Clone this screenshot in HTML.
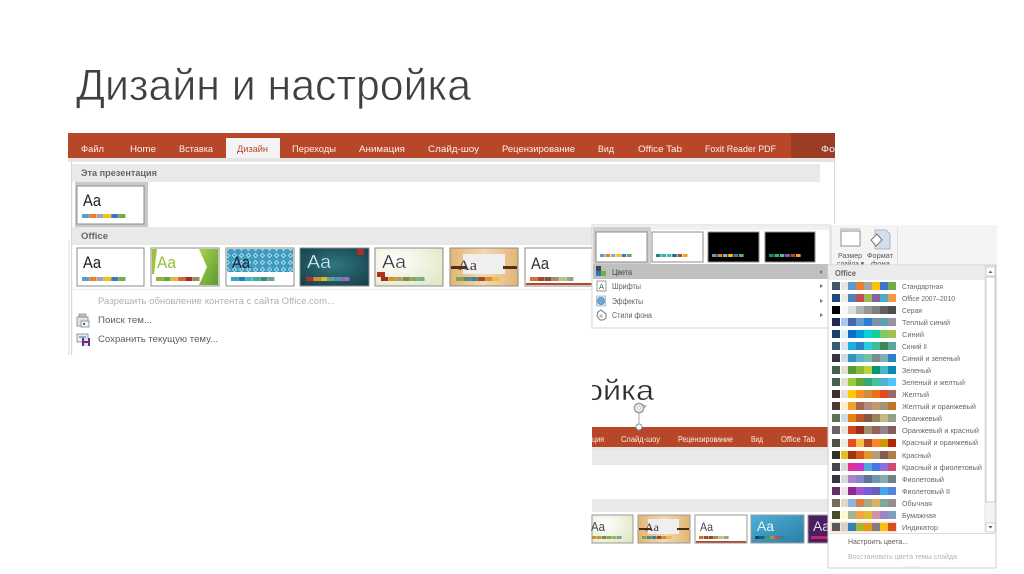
<!DOCTYPE html>
<html lang="ru"><head><meta charset="utf-8"><title>Дизайн и настройка</title>
<style>
html,body{margin:0;padding:0;background:#fff;width:1024px;height:574px;overflow:hidden}
svg{display:block;font-family:"Liberation Sans",sans-serif}
.b{filter:blur(.3px)}
.w{fill:#fbf0eb;font-size:9.5px}
.m{fill:#5e5e5e;font-size:8px}
.k{fill:#686868;font-size:7.5px}
.a{fill:#1e1e1e;font-size:17px}
.s rect{width:8px;height:8px}
.t rect{width:7px;height:4px}
.u rect{width:4.6px;height:3px}
</style></head><body>
<svg width="1024" height="574" viewBox="0 0 1024 574" xmlns="http://www.w3.org/2000/svg">
<defs>
<radialGradient id="g4" cx=".5" cy=".45" r=".65"><stop offset="0" stop-color="#2f7680"/><stop offset="1" stop-color="#17434e"/></radialGradient>
<radialGradient id="g5" cx=".3" cy=".35" r=".8"><stop offset="0" stop-color="#fff"/><stop offset="1" stop-color="#e2e9c8"/></radialGradient>
<linearGradient id="g6" x1="0" x2="1" y1="0" y2="0"><stop offset="0" stop-color="#e3b574"/><stop offset=".5" stop-color="#f4d9b0"/><stop offset="1" stop-color="#e3b574"/></linearGradient>
<linearGradient id="g7" x1="0" x2="1" y1="0" y2="1"><stop offset="0" stop-color="#4db0d4"/><stop offset="1" stop-color="#2a7ea6"/></linearGradient>
<linearGradient id="g2" x1="0" x2="1" y1="0" y2="1"><stop offset="0" stop-color="#a9d154"/><stop offset="1" stop-color="#5c9a2c"/></linearGradient>
<pattern id="p3" width="7" height="7" patternUnits="userSpaceOnUse"><rect width="7" height="7" fill="#3c9cc2"/><path d="M3.500 .8l2.700 2.700-2.700 2.700-2.700-2.700z" fill="#b4dde9"/><circle cx="3.500" cy="3.500" r="1" fill="#2a7fa3"/></pattern>
</defs>
<text x="76" y="100" font-size="44" fill="#404040" stroke="#fff" stroke-width=".7" textLength="395" lengthAdjust="spacingAndGlyphs">Дизайн и настройка</text>
<g class="b">
<!-- Main ribbon -->
<rect x="68" y="133" width="767" height="25" fill="#b8472a"/>
<rect x="791" y="133" width="44" height="25" fill="#9b3d25"/>
<rect x="226" y="138" width="54" height="20" fill="#f4f4f4"/>
<text class="w" x="81" y="152" textLength="23" lengthAdjust="spacingAndGlyphs">Файл</text>
<text class="w" x="130" y="152" textLength="26" lengthAdjust="spacingAndGlyphs">Home</text>
<text class="w" x="179" y="152" textLength="34" lengthAdjust="spacingAndGlyphs">Вставка</text>
<text x="237" y="152" font-size="9.5" fill="#b8472a" textLength="31" lengthAdjust="spacingAndGlyphs">Дизайн</text>
<text class="w" x="292" y="152" textLength="44" lengthAdjust="spacingAndGlyphs">Переходы</text>
<text class="w" x="359" y="152" textLength="46" lengthAdjust="spacingAndGlyphs">Анимация</text>
<text class="w" x="428" y="152" textLength="51" lengthAdjust="spacingAndGlyphs">Слайд-шоу</text>
<text class="w" x="502" y="152" textLength="73" lengthAdjust="spacingAndGlyphs">Рецензирование</text>
<text class="w" x="598" y="152" textLength="16" lengthAdjust="spacingAndGlyphs">Вид</text>
<text class="w" x="638" y="152" textLength="44" lengthAdjust="spacingAndGlyphs">Office Tab</text>
<text class="w" x="705" y="152" textLength="71" lengthAdjust="spacingAndGlyphs">Foxit Reader PDF</text>
<text class="w" x="821" y="152" textLength="14" lengthAdjust="spacingAndGlyphs">Фо</text>
<!-- Panel -->
<rect x="68" y="158" width="767" height="4" fill="#e4e4e4"/>
<rect x="71" y="162" width="1.2" height="193" fill="#d8d8d8"/>
<rect x="68" y="240" width="2" height="115" fill="#ececec"/>
<rect x="834" y="158" width="1.2" height="66" fill="#d8d8d8"/>
<rect x="72" y="164" width="748" height="18" fill="#e9e9e9"/>
<text x="81" y="176" font-size="9" font-weight="bold" fill="#666" textLength="76" lengthAdjust="spacingAndGlyphs">Эта презентация</text>
<rect x="75" y="182" width="73" height="45" fill="#c9c9c9"/>
<rect x="77" y="186" width="67" height="38" fill="#fff" stroke="#8b8b8b" stroke-width="1"/>
<text class="a" x="83" y="206" textLength="18" lengthAdjust="spacingAndGlyphs">Aa</text>
<g class="t" transform="translate(82,214)"><rect x="0" fill="#5b9bd5"/><rect x="7.300" fill="#ed7d31"/><rect x="14.600" fill="#a5a5a5"/><rect x="21.900" fill="#ffc000"/><rect x="29.200" fill="#4472c4"/><rect x="36.500" fill="#70ad47"/></g>
<rect x="72" y="227" width="520" height="18" fill="#e9e9e9"/>
<text x="81" y="239" font-size="9.5" font-weight="bold" fill="#666" textLength="27" lengthAdjust="spacingAndGlyphs">Office</text>
<!-- Thumb 1 -->
<rect x="77" y="248" width="67" height="38" fill="#fff" stroke="#8b8b8b"/>
<text class="a" x="83" y="268" textLength="18" lengthAdjust="spacingAndGlyphs">Aa</text>
<g class="t" transform="translate(82,277)"><rect x="0" fill="#5b9bd5"/><rect x="7.300" fill="#ed7d31"/><rect x="14.600" fill="#a5a5a5"/><rect x="21.900" fill="#ffc000"/><rect x="29.200" fill="#4472c4"/><rect x="36.500" fill="#70ad47"/></g>
<!-- Thumb 2 -->
<rect x="151" y="248" width="68" height="38" fill="#fff" stroke="#8b8b8b"/>
<path d="M152 249h5l-3 25h-2z" fill="#9cc43c"/>
<path d="M199 249h19v36h-19l8-18z" fill="url(#g2)"/>
<text x="157" y="268" font-size="17" fill="#96c03a" textLength="19" lengthAdjust="spacingAndGlyphs">Aa</text>
<g class="t" transform="translate(156,277)"><rect x="0" fill="#8ab833"/><rect x="7.300" fill="#63a537"/><rect x="14.600" fill="#e3b440"/><rect x="21.900" fill="#d9632d"/><rect x="29.200" fill="#a62a20"/><rect x="36.500" fill="#9c8a60"/></g>
<!-- Thumb 3 -->
<rect x="226" y="248" width="68" height="38" fill="#fff" stroke="#8b8b8b"/>
<rect x="227" y="249" width="66" height="23" fill="url(#p3)"/>
<text x="232" y="268" font-size="17" fill="#14263a" textLength="18" lengthAdjust="spacingAndGlyphs">Aa</text>
<g class="t" transform="translate(231,277)"><rect x="0" fill="#35a5cf"/><rect x="7.300" fill="#2a7eb0"/><rect x="14.600" fill="#3fb9c9"/><rect x="21.900" fill="#3fae9d"/><rect x="29.200" fill="#3d8d72"/><rect x="36.500" fill="#6ba3a0"/></g>
<!-- Thumb 4 -->
<rect x="300" y="248" width="69" height="38" fill="url(#g4)" stroke="#8b8b8b"/>
<rect x="357" y="249" width="7" height="6" fill="#a8302c"/>
<text x="307" y="268" font-size="18" fill="#dbecef" stroke="#1f5c68" stroke-width=".3" textLength="24" lengthAdjust="spacingAndGlyphs">Aa</text>
<g class="t" transform="translate(306,277)"><rect x="0" fill="#b82a24"/><rect x="7.300" fill="#d98a28"/><rect x="14.600" fill="#dcb733"/><rect x="21.900" fill="#6f9e8c"/><rect x="29.200" fill="#5e8db5"/><rect x="36.500" fill="#a26bb0"/></g>
<!-- Thumb 5 -->
<rect x="375" y="248" width="68" height="38" fill="url(#g5)" stroke="#8b8b8b"/>
<text x="382" y="268" font-size="18" fill="#333" stroke="#fff" stroke-width=".3" textLength="24" lengthAdjust="spacingAndGlyphs">Aa</text>
<rect x="377" y="272" width="8" height="5" fill="#b0341e"/>
<g class="t" transform="translate(381,277)"><rect x="0" fill="#a02c1c"/><rect x="7.300" fill="#d88c2c"/><rect x="14.600" fill="#b39a60"/><rect x="21.900" fill="#7f8c4c"/><rect x="29.200" fill="#8fa55c"/><rect x="36.500" fill="#6fae98"/></g>
<!-- Thumb 6 -->
<rect x="450" y="248" width="68" height="38" fill="url(#g6)" stroke="#8b8b8b"/>
<rect x="463" y="254" width="42" height="20" fill="#f0eeee"/>
<rect x="451" y="266" width="15" height="3" fill="#55301a"/><rect x="503" y="266" width="14" height="3" fill="#55301a"/>
<text x="458" y="270" font-size="15" font-family="Liberation Serif" fill="#3a3a3a" textLength="19" lengthAdjust="spacingAndGlyphs">Aa</text>
<g class="t" transform="translate(456,277)"><rect x="0" fill="#7fa558"/><rect x="7.300" fill="#548c80"/><rect x="14.600" fill="#3e7fa8"/><rect x="21.900" fill="#a3492a"/><rect x="29.200" fill="#dd8a34"/><rect x="36.500" fill="#e5c04c"/></g>
<!-- Thumb 7 -->
<rect x="525" y="248" width="68" height="38" fill="#fff" stroke="#8b8b8b"/>
<text x="531" y="269" font-size="17" fill="#333" textLength="18" lengthAdjust="spacingAndGlyphs">Aa</text>
<g class="t" transform="translate(530,277)"><rect x="0" fill="#d5712b"/><rect x="7.300" fill="#a04a2a"/><rect x="14.600" fill="#84533c"/><rect x="21.900" fill="#a58e6a"/><rect x="29.200" fill="#c4c08c"/><rect x="36.500" fill="#96a48c"/></g>
<rect x="526" y="283" width="66" height="2" fill="#b8472a"/>
<rect x="73" y="289" width="519" height="1" fill="#ececec"/>
<!-- Menu lines -->
<text x="98" y="304" font-size="9.5" fill="#b0b0b0" textLength="237" lengthAdjust="spacingAndGlyphs">Разрешить обновление контента с сайта Office.com...</text>
<text x="98" y="323" font-size="9.5" fill="#5e5e5e" textLength="54" lengthAdjust="spacingAndGlyphs">Поиск тем...</text>
<text x="98" y="342" font-size="9.5" fill="#5e5e5e" textLength="120" lengthAdjust="spacingAndGlyphs">Сохранить текущую тему...</text>
<!-- Search icon -->
<rect x="79" y="314" width="7" height="3" fill="#c4c8cc" stroke="#7f8488" stroke-width=".7"/>
<rect x="77" y="317" width="11" height="9" fill="#dfe4e8" stroke="#7f8488" stroke-width=".8"/>
<rect x="81" y="321" width="8" height="6" fill="#f0f2f4" stroke="#808488" stroke-width=".8"/>
<rect x="83" y="323" width="2" height="2" fill="#2f6d99"/>
<!-- Save icon -->
<rect x="77" y="334" width="11" height="8" fill="#e8ecf0" stroke="#7b8388" stroke-width=".8"/>
<rect x="79" y="336" width="7" height="2" fill="#8fb0c8"/>
<rect x="82" y="338" width="8" height="8" fill="#6a2d82"/>
<rect x="84" y="338" width="4" height="3" fill="#e8dcef"/><rect x="84" y="343" width="4" height="3" fill="#e8dcef"/>
<!-- Second title fragment -->
<svg x="592" y="360" width="70" height="50"><text x="-7" y="40" font-size="29" fill="#2e2e2e" stroke="#fff" stroke-width=".4" textLength="69" lengthAdjust="spacingAndGlyphs">ойка</text></svg>
<circle cx="639" cy="408" r="4.600" fill="none" stroke="#a0a0a0" stroke-width="1.600"/><circle cx="639" cy="408" r="2" fill="none" stroke="#c0c0c0"/>
<path d="M643 405l3 1-2 2" fill="none" stroke="#a0a0a0"/>
<line x1="639" y1="413" x2="639" y2="425" stroke="#a8a8a8"/>
<!-- Second ribbon -->
<rect x="592" y="427" width="236" height="20" fill="#b8472a"/>
<circle cx="639" cy="427" r="3" fill="#fff" stroke="#7f92a8" stroke-width="1"/>
<g font-size="8" fill="#fbf0eb">
<text x="592" y="442" textLength="12" lengthAdjust="spacingAndGlyphs">ция</text>
<text x="621" y="442" textLength="39" lengthAdjust="spacingAndGlyphs">Слайд-шоу</text>
<text x="678" y="442" textLength="55" lengthAdjust="spacingAndGlyphs">Рецензирование</text>
<text x="751" y="442" textLength="12" lengthAdjust="spacingAndGlyphs">Вид</text>
<text x="781" y="442" textLength="34" lengthAdjust="spacingAndGlyphs">Office Tab</text>
</g>
<rect x="592" y="447" width="236" height="3" fill="#e4e4e4"/>
<rect x="592" y="450" width="236" height="15" fill="#e9e9e9"/>
<rect x="592" y="499" width="236" height="13" fill="#e9e9e9"/>
<!-- Lower thumbs -->
<rect x="592" y="515" width="41" height="28" fill="url(#g5)" stroke="#999"/>
<text x="591" y="531" font-size="13" fill="#444" textLength="14" lengthAdjust="spacingAndGlyphs">Aa</text>
<g class="u" transform="translate(592,536)"><rect x="0" fill="#d88c2c"/><rect x="5" fill="#b39a60"/><rect x="10" fill="#7f8c4c"/><rect x="15" fill="#8fa55c"/><rect x="20" fill="#9bb46c"/><rect x="25" fill="#6fae98"/></g>
<rect x="638" y="515" width="52" height="28" fill="url(#g6)" stroke="#999"/>
<rect x="648" y="519" width="31" height="15" fill="#f0eeee"/>
<rect x="639" y="528" width="12" height="2" fill="#4c2c18"/><rect x="677" y="528" width="12" height="2" fill="#4c2c18"/>
<text x="645" y="531" font-size="11.500" font-family="Liberation Serif" fill="#3a3a3a" textLength="14" lengthAdjust="spacingAndGlyphs">Aa</text>
<g class="u" transform="translate(642,536)"><rect x="0" fill="#7fa558"/><rect x="5" fill="#548c80"/><rect x="10" fill="#3e7fa8"/><rect x="15" fill="#a3492a"/><rect x="20" fill="#dd8a34"/><rect x="25" fill="#e5c04c"/></g>
<rect x="695" y="515" width="52" height="28" fill="#fff" stroke="#999"/>
<text x="700" y="531" font-size="12" fill="#444" textLength="13" lengthAdjust="spacingAndGlyphs">Aa</text>
<g class="u" transform="translate(699,536)"><rect x="0" fill="#d5712b"/><rect x="5" fill="#a04a2a"/><rect x="10" fill="#84533c"/><rect x="15" fill="#a58e6a"/><rect x="20" fill="#c4c08c"/><rect x="25" fill="#96a48c"/></g>
<rect x="696" y="541" width="50" height="1.600" fill="#b8472a"/>
<rect x="751" y="515" width="53" height="28" fill="url(#g7)" stroke="#999"/>
<text x="757" y="531" font-size="14" fill="#e8f6fa" textLength="17" lengthAdjust="spacingAndGlyphs">Aa</text>
<g class="u" transform="translate(755,536)"><rect x="0" fill="#173b70"/><rect x="5" fill="#1d5d8c"/><rect x="10" fill="#3f9f5e"/><rect x="15" fill="#c8843a"/><rect x="20" fill="#c04f3a"/><rect x="25" fill="#2f7fa0"/></g>
<rect x="808" y="515" width="22" height="28" fill="#4a1f5f" stroke="#999"/>
<text x="813" y="531" font-size="14" fill="#e7d8ee" textLength="17" lengthAdjust="spacingAndGlyphs">Aa</text>
<rect x="811" y="536" width="17" height="3" fill="#c3246c"/>
<!-- Right toolbar fragment -->
<rect x="830" y="225" width="167" height="42" fill="#f4f4f4"/>
<rect x="897" y="227" width="1" height="38" fill="#dedede"/>
<rect x="831" y="226" width="1" height="40" fill="#e4e4e4"/>
<rect x="841" y="231" width="19" height="15" fill="#fff" stroke="#8f8f8f"/>
<path d="M840 229h20" stroke="#b0b0b0"/>
<path d="M875 230h11l4 4v15h-15z" fill="#d3dfec" stroke="#9aa8b8" stroke-width=".8"/>
<path d="M877 234l-6 6 5 6 6-6z" fill="#fff" stroke="#777"/>
<text x="838" y="258" font-size="7.500" fill="#555" textLength="24" lengthAdjust="spacingAndGlyphs">Размер</text>
<text x="867" y="258" font-size="7.500" fill="#555" textLength="26" lengthAdjust="spacingAndGlyphs">Формат</text>
<text x="837" y="266" font-size="7.500" fill="#555" textLength="27" lengthAdjust="spacingAndGlyphs">слайда ▾</text>
<text x="871" y="266" font-size="7.500" fill="#555" textLength="19" lengthAdjust="spacingAndGlyphs">фона</text>
<!-- Dropdown panel -->
<rect x="592" y="225" width="238" height="103" fill="#fff" stroke="#d4d4d4"/>
<rect x="593" y="226" width="236" height="4" fill="#f1f1f1"/>
<rect x="593" y="227" width="58" height="37" fill="#cfcfcf"/>
<rect x="596" y="232" width="51" height="30" fill="#fff" stroke="#8b8b8b"/>
<rect x="652" y="232" width="51" height="30" fill="#fff" stroke="#8b8b8b"/>
<rect x="708" y="232" width="51" height="30" fill="#000" stroke="#8b8b8b"/>
<rect x="765" y="232" width="50" height="30" fill="#000" stroke="#8b8b8b"/>
<g class="u" transform="translate(600,254)"><rect x="0" fill="#5b9bd5"/><rect x="5.400" fill="#ed7d31"/><rect x="10.800" fill="#a5a5a5"/><rect x="16.200" fill="#ffc000"/><rect x="21.600" fill="#4472c4"/><rect x="27" fill="#70ad47"/></g>
<g class="u" transform="translate(656,254)"><rect x="0" fill="#1a8a78"/><rect x="5.400" fill="#3cb0a8"/><rect x="10.800" fill="#4ab5c4"/><rect x="16.200" fill="#1e6d8a"/><rect x="21.600" fill="#b24a30"/><rect x="27" fill="#f0a22e"/></g>
<g class="u" transform="translate(712,254)"><rect x="0" fill="#5b9bd5"/><rect x="5.400" fill="#ed7d31"/><rect x="10.800" fill="#a5a5a5"/><rect x="16.200" fill="#ffc000"/><rect x="21.600" fill="#4472c4"/><rect x="27" fill="#70ad47"/></g>
<g class="u" transform="translate(769,254)"><rect x="0" fill="#1a8a78"/><rect x="5.400" fill="#3cb06a"/><rect x="10.800" fill="#4ab5c4"/><rect x="16.200" fill="#8c5ab8"/><rect x="21.600" fill="#b24a30"/><rect x="27" fill="#f0a22e"/></g>
<rect x="593" y="264" width="235" height="15" fill="#c0c0c0"/>
<rect x="596" y="266" width="5" height="5" fill="#34495e"/><rect x="601" y="266" width="5" height="5" fill="#b8c2a8"/><rect x="596" y="271" width="5" height="5" fill="#2e75b6"/><rect x="601" y="271" width="5" height="5" fill="#70ad47"/>
<text class="m" x="612" y="275" textLength="20" lengthAdjust="spacingAndGlyphs" style="fill:#444">Цвета</text>
<rect x="597" y="281" width="9" height="10" fill="#fff" stroke="#9a9a9a"/>
<text x="599" y="289" font-size="7.500" fill="#2a5a8a">A</text>
<text class="m" x="612" y="289" textLength="29" lengthAdjust="spacingAndGlyphs">Шрифты</text>
<rect x="596.500" y="296" width="9" height="10" fill="#dbe7f0" stroke="#9ab4c8" stroke-width=".7"/><circle cx="601" cy="301" r="3.600" fill="#6fa8d8" stroke="#4f7fa8" stroke-width=".7"/>
<text class="m" x="612" y="304" textLength="31" lengthAdjust="spacingAndGlyphs">Эффекты</text>
<path d="M598 312l3-2 5 4v4l-3 2h-3l-3-4z" fill="#fff" stroke="#777"/><circle cx="601" cy="316" r="1.600" fill="#bbb"/>
<text class="m" x="612" y="318" textLength="40" lengthAdjust="spacingAndGlyphs">Стили фона</text>
<g fill="#777"><path d="M820 270l3 2-3 2zM820 284l3 2-3 2zM820 299l3 2-3 2zM820 313l3 2-3 2z"/></g>
<!-- Colours list -->
<rect x="828" y="265" width="168" height="303" fill="#fff" stroke="#cfcfcf"/>
<rect x="829" y="266" width="156" height="14" fill="#ececec"/>
<text x="835" y="276" font-size="8" font-weight="bold" fill="#666" textLength="21" lengthAdjust="spacingAndGlyphs">Office</text>
<rect x="985" y="266" width="10" height="266" fill="#f3f3f3" stroke="#dcdcdc" stroke-width=".7"/>
<rect x="986" y="267" width="9" height="9" fill="#fff" stroke="#bbb" stroke-width=".6"/>
<path d="M988.500 273l2-2.500 2 2.500z" fill="#666"/>
<rect x="986" y="277" width="9" height="225" fill="#fff" stroke="#c4c4c4" stroke-width=".8"/>
<rect x="986" y="523" width="9" height="9" fill="#fff" stroke="#bbb" stroke-width=".6"/>
<path d="M988.500 526l2 2.500 2-2.500z" fill="#555"/>
<rect x="830" y="521.500" width="67" height="11" fill="#f8e2d4"/>
<g class="s">
<g transform="translate(832,282)"><rect x="0" fill="#44546a"/><rect x="9" fill="#e7e6e6"/><rect x="16" fill="#5b9bd5"/><rect x="24" fill="#ed7d31"/><rect x="32" fill="#a5a5a5"/><rect x="40" fill="#ffc000"/><rect x="48" fill="#4472c4"/><rect x="56" fill="#70ad47"/></g>
<g transform="translate(832,294)"><rect x="0" fill="#1f497d"/><rect x="9" fill="#eeece1"/><rect x="16" fill="#4f81bd"/><rect x="24" fill="#c0504d"/><rect x="32" fill="#9bbb59"/><rect x="40" fill="#8064a2"/><rect x="48" fill="#4bacc6"/><rect x="56" fill="#f79646"/></g>
<g transform="translate(832,306)"><rect x="0" fill="#000"/><rect x="9" fill="#f8f8f8"/><rect x="16" fill="#ddd"/><rect x="24" fill="#b2b2b2"/><rect x="32" fill="#969696"/><rect x="40" fill="#808080"/><rect x="48" fill="#5f5f5f"/><rect x="56" fill="#4d4d4d"/></g>
<g transform="translate(832,318)"><rect x="0" fill="#242852"/><rect x="9" fill="#acc9f0"/><rect x="16" fill="#4a66ac"/><rect x="24" fill="#629dd1"/><rect x="32" fill="#297fd5"/><rect x="40" fill="#7f8fa9"/><rect x="48" fill="#5aa2ae"/><rect x="56" fill="#9d90a0"/></g>
<g transform="translate(832,330)"><rect x="0" fill="#17406d"/><rect x="9" fill="#dbeff9"/><rect x="16" fill="#0f6fc6"/><rect x="24" fill="#009dd9"/><rect x="32" fill="#0bd0d9"/><rect x="40" fill="#10cf9b"/><rect x="48" fill="#7cca62"/><rect x="56" fill="#a5c249"/></g>
<g transform="translate(832,342)"><rect x="0" fill="#335b74"/><rect x="9" fill="#dfe3e5"/><rect x="16" fill="#1cade4"/><rect x="24" fill="#2683c6"/><rect x="32" fill="#27ced7"/><rect x="40" fill="#42ba97"/><rect x="48" fill="#3e8853"/><rect x="56" fill="#62a39f"/></g>
<g transform="translate(832,354)"><rect x="0" fill="#373545"/><rect x="9" fill="#cedbe6"/><rect x="16" fill="#3494ba"/><rect x="24" fill="#58b6c0"/><rect x="32" fill="#75bda7"/><rect x="40" fill="#7a8c8e"/><rect x="48" fill="#84acb6"/><rect x="56" fill="#2683c6"/></g>
<g transform="translate(832,366)"><rect x="0" fill="#455f51"/><rect x="9" fill="#e3ded1"/><rect x="16" fill="#549e39"/><rect x="24" fill="#8ab833"/><rect x="32" fill="#c0cf3a"/><rect x="40" fill="#029676"/><rect x="48" fill="#4ab5c4"/><rect x="56" fill="#0989b1"/></g>
<g transform="translate(832,378)"><rect x="0" fill="#455f51"/><rect x="9" fill="#e3ded1"/><rect x="16" fill="#99cb38"/><rect x="24" fill="#63a537"/><rect x="32" fill="#37a76f"/><rect x="40" fill="#44c1a3"/><rect x="48" fill="#4eb3cf"/><rect x="56" fill="#51c3f9"/></g>
<g transform="translate(832,390)"><rect x="0" fill="#39302a"/><rect x="9" fill="#e5dedb"/><rect x="16" fill="#ffca08"/><rect x="24" fill="#f8931d"/><rect x="32" fill="#ce8d3e"/><rect x="40" fill="#ec7016"/><rect x="48" fill="#e64823"/><rect x="56" fill="#9c6a6a"/></g>
<g transform="translate(832,402)"><rect x="0" fill="#4e3b30"/><rect x="9" fill="#fbeec9"/><rect x="16" fill="#f0a22e"/><rect x="24" fill="#a5644e"/><rect x="32" fill="#b58b80"/><rect x="40" fill="#c3986d"/><rect x="48" fill="#a19574"/><rect x="56" fill="#c17529"/></g>
<g transform="translate(832,414)"><rect x="0" fill="#637052"/><rect x="9" fill="#ccddea"/><rect x="16" fill="#e48312"/><rect x="24" fill="#bd582c"/><rect x="32" fill="#865640"/><rect x="40" fill="#9b8357"/><rect x="48" fill="#c2bc80"/><rect x="56" fill="#94a088"/></g>
<g transform="translate(832,426)"><rect x="0" fill="#696464"/><rect x="9" fill="#e9e5dc"/><rect x="16" fill="#d34817"/><rect x="24" fill="#9b2d1f"/><rect x="32" fill="#a28e6a"/><rect x="40" fill="#956251"/><rect x="48" fill="#918485"/><rect x="56" fill="#855d5d"/></g>
<g transform="translate(832,439)"><rect x="0" fill="#505046"/><rect x="9" fill="#eeece1"/><rect x="16" fill="#e84c22"/><rect x="24" fill="#ffbd47"/><rect x="32" fill="#b64926"/><rect x="40" fill="#ff8427"/><rect x="48" fill="#cc9900"/><rect x="56" fill="#b22600"/></g>
<g transform="translate(832,451)"><rect x="0" fill="#2f2f2f"/><rect x="9" fill="#e5c020"/><rect x="16" fill="#9d3511"/><rect x="24" fill="#d55816"/><rect x="32" fill="#e19825"/><rect x="40" fill="#b19c7d"/><rect x="48" fill="#7f5f52"/><rect x="56" fill="#b27d49"/></g>
<g transform="translate(832,463)"><rect x="0" fill="#454551"/><rect x="9" fill="#d8d9dc"/><rect x="16" fill="#e32d91"/><rect x="24" fill="#c830cc"/><rect x="32" fill="#4ea6dc"/><rect x="40" fill="#4775e7"/><rect x="48" fill="#8971e1"/><rect x="56" fill="#d54773"/></g>
<g transform="translate(832,475)"><rect x="0" fill="#373545"/><rect x="9" fill="#dcd8dc"/><rect x="16" fill="#ad84c6"/><rect x="24" fill="#8784c7"/><rect x="32" fill="#5d739a"/><rect x="40" fill="#6997af"/><rect x="48" fill="#84acb6"/><rect x="56" fill="#6f8183"/></g>
<g transform="translate(832,487)"><rect x="0" fill="#632e62"/><rect x="9" fill="#eae5eb"/><rect x="16" fill="#92278f"/><rect x="24" fill="#9b57d3"/><rect x="32" fill="#755dd9"/><rect x="40" fill="#665eb8"/><rect x="48" fill="#45a5ed"/><rect x="56" fill="#5982db"/></g>
<g transform="translate(832,499)"><rect x="0" fill="#776a5e"/><rect x="9" fill="#dfd9c8"/><rect x="16" fill="#8eb5d9"/><rect x="24" fill="#dd8047"/><rect x="32" fill="#a5ab81"/><rect x="40" fill="#d8b25c"/><rect x="48" fill="#7ba79d"/><rect x="56" fill="#968c8c"/></g>
<g transform="translate(832,511)"><rect x="0" fill="#444d26"/><rect x="9" fill="#fefac9"/><rect x="16" fill="#a5b592"/><rect x="24" fill="#f3a447"/><rect x="32" fill="#e7bc29"/><rect x="40" fill="#d092a7"/><rect x="48" fill="#9c85c0"/><rect x="56" fill="#809ec2"/></g>
<g transform="translate(832,523)"><rect x="0" fill="#595959"/><rect x="9" fill="#d1d1d1"/><rect x="16" fill="#2c85b5"/><rect x="24" fill="#a7b62b"/><rect x="32" fill="#e8961b"/><rect x="40" fill="#837e7e"/><rect x="48" fill="#f9c00c"/><rect x="56" fill="#d74e20"/></g>
</g>
<text class="k" x="902" y="289" textLength="41" lengthAdjust="spacingAndGlyphs">Стандартная</text>
<text class="k" x="902" y="301" textLength="53" lengthAdjust="spacingAndGlyphs">Office 2007–2010</text>
<text class="k" x="902" y="313" textLength="20" lengthAdjust="spacingAndGlyphs">Серая</text>
<text class="k" x="902" y="325" textLength="48" lengthAdjust="spacingAndGlyphs">Теплый синий</text>
<text class="k" x="902" y="337" textLength="22" lengthAdjust="spacingAndGlyphs">Синий</text>
<text class="k" x="902" y="349" textLength="25" lengthAdjust="spacingAndGlyphs">Синий II</text>
<text class="k" x="902" y="361" textLength="58" lengthAdjust="spacingAndGlyphs">Синий и зеленый</text>
<text class="k" x="902" y="373" textLength="29" lengthAdjust="spacingAndGlyphs">Зеленый</text>
<text class="k" x="902" y="385" textLength="63" lengthAdjust="spacingAndGlyphs">Зеленый и желтый</text>
<text class="k" x="902" y="397" textLength="27" lengthAdjust="spacingAndGlyphs">Желтый</text>
<text class="k" x="902" y="409" textLength="74" lengthAdjust="spacingAndGlyphs">Желтый и оранжевый</text>
<text class="k" x="902" y="421" textLength="40" lengthAdjust="spacingAndGlyphs">Оранжевый</text>
<text class="k" x="902" y="433" textLength="77" lengthAdjust="spacingAndGlyphs">Оранжевый и красный</text>
<text class="k" x="902" y="445" textLength="76" lengthAdjust="spacingAndGlyphs">Красный и оранжевый</text>
<text class="k" x="902" y="458" textLength="29" lengthAdjust="spacingAndGlyphs">Красный</text>
<text class="k" x="902" y="470" textLength="80" lengthAdjust="spacingAndGlyphs">Красный и фиолетовый</text>
<text class="k" x="902" y="482" textLength="42" lengthAdjust="spacingAndGlyphs">Фиолетовый</text>
<text class="k" x="902" y="494" textLength="48" lengthAdjust="spacingAndGlyphs">Фиолетовый II</text>
<text class="k" x="902" y="506" textLength="30" lengthAdjust="spacingAndGlyphs">Обычная</text>
<text class="k" x="902" y="518" textLength="34" lengthAdjust="spacingAndGlyphs">Бумажная</text>
<text class="k" x="902" y="530" textLength="36" lengthAdjust="spacingAndGlyphs">Индикатор</text>
<rect x="829" y="533" width="166" height="1" fill="#dcdcdc"/>
<text x="848" y="544" font-size="7.500" fill="#5e5e5e" textLength="60" lengthAdjust="spacingAndGlyphs">Настроить цвета...</text>
<text x="848" y="559" font-size="7.500" fill="#b4b4b4" textLength="109" lengthAdjust="spacingAndGlyphs">Восстановить цвета темы слайда</text>
<text x="905" y="567" font-size="6" fill="#aaa" textLength="13">....</text>
</g>
</svg>
</body></html>
